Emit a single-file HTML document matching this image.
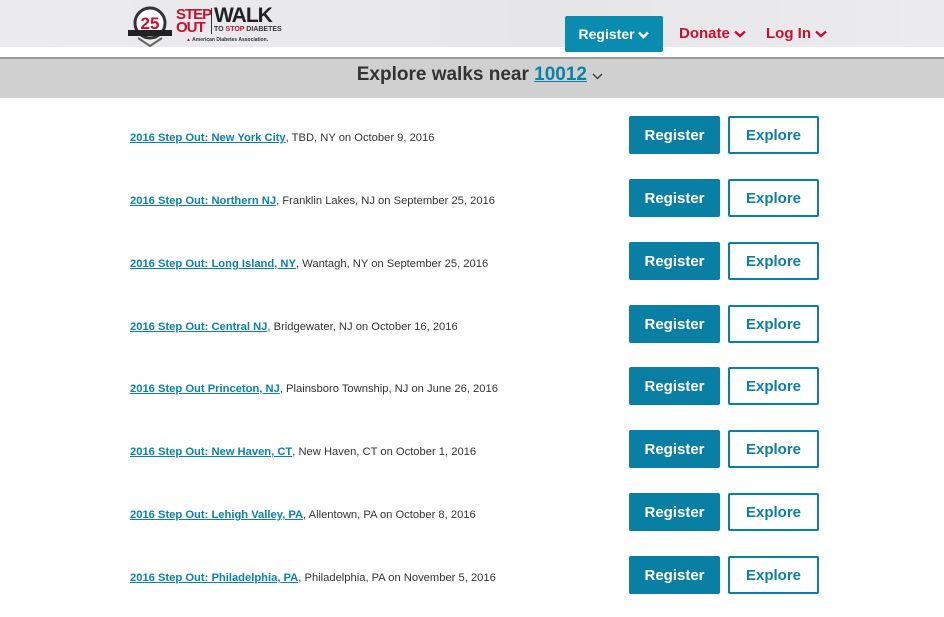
<!DOCTYPE html>
<html><head><meta charset="utf-8"><style>
*{margin:0;padding:0;box-sizing:border-box}
body{width:944px;height:617px;overflow:hidden;background:#fff;font-family:"Liberation Sans",Arial,sans-serif;position:relative}
.hdr{position:absolute;left:0;top:0;width:944px;height:47px;background:linear-gradient(90deg,#ececee,#e6e6e8 60%,#ececee)}
.strip{position:absolute;left:0;top:47px;width:944px;height:10px;background:#fff}
.bar{position:absolute;left:0;top:57px;width:944px;height:41px;background:#d0d0d0;border-top:2px solid #9a9a9a;text-align:center;font-weight:bold;font-size:19px;color:#333;line-height:31px;padding-left:16px}
.bar a{color:#0a82a8;text-decoration:underline}
.nav-reg{position:absolute;left:565px;top:16px;width:98px;height:36px;background:#0a8bb0;color:#fff;font-weight:bold;font-size:14px;line-height:36px;text-align:center;border-radius:2px}
.nav{position:absolute;top:25px;color:#c8102e;font-weight:bold;font-size:15px}
.row{position:absolute;left:130px;font-size:11.2px;color:#333;margin-top:1px}
.row a{color:#0a82a8;font-weight:bold;text-decoration:underline}
.b{position:absolute;height:38px;font-weight:bold;font-size:15px;text-align:center;border-radius:2px;padding-top:2px}
.r{left:629px;width:91px;background:#0a7fa4;color:#fff;line-height:36px}
.e{left:728px;width:91px;border:2px solid #0a7fa4;color:#0a7fa4;line-height:32px;background:#fff}
</style></head><body>
<div class="hdr"></div>
<div class="strip"></div>
<svg style="position:absolute;left:126px;top:4px" width="50" height="44" viewBox="0 0 50 44">
<circle cx="24" cy="19" r="15" fill="#fff" stroke="#333" stroke-width="3"/>
<rect x="2" y="26" width="44" height="6" fill="#222"/>
<path d="M12 34 L24 42 L36 34" fill="none" stroke="#666" stroke-width="2"/>
<text x="24" y="25" font-family="Liberation Sans" font-weight="bold" font-size="17" fill="#c8102e" text-anchor="middle">25</text>
</svg>
<div style="position:absolute;left:176px;top:8px;color:#c8102e;font-weight:bold;font-size:15px;line-height:13px;letter-spacing:-1px">STEP<br>OUT</div>
<div style="position:absolute;left:211px;top:8px;width:1px;height:26px;background:#333"></div>
<div style="position:absolute;left:214px;top:6px;color:#222;font-weight:bold;font-size:21px;letter-spacing:-1px;line-height:20px">WALK</div>
<div style="position:absolute;left:214px;top:26px;color:#333;font-size:7px;font-weight:bold">TO <span style="color:#c8102e">STOP</span> DIABETES</div>
<div style="position:absolute;left:186px;top:37px;color:#333;font-size:5px;font-weight:bold"><span style="color:#c8102e">▲</span> American Diabetes Association.</div>

<div class="nav-reg">Register <svg width="11" height="8" viewBox="0 0 11 8"><path d="M1 1.5 L5.5 6 L10 1.5" stroke="#fff" stroke-width="2.4" fill="none"/></svg></div>
<div class="nav" style="left:679px">Donate <svg width="12" height="8" viewBox="0 0 12 8"><path d="M1 1.5 L6 6 L11 1.5" stroke="#c8102e" stroke-width="2.4" fill="none"/></svg></div>
<div class="nav" style="left:766px">Log In <svg width="12" height="8" viewBox="0 0 12 8"><path d="M1 1.5 L6 6 L11 1.5" stroke="#c8102e" stroke-width="2.4" fill="none"/></svg></div>

<div class="bar">Explore walks near <a>10012</a> <svg width="11" height="7" viewBox="0 0 11 7"><path d="M1 1 L5.5 5.5 L10 1" stroke="#444" stroke-width="1.5" fill="none"/></svg></div>

<div class="row" style="top:131px"><a>2016 Step Out: New York City</a>, TBD, NY on October 9, 2016</div>
<div class="b r" style="top:116px">Register</div><div class="b e" style="top:116px">Explore</div>

<div class="row" style="top:194px"><a>2016 Step Out: Northern NJ</a>, Franklin Lakes, NJ on September 25, 2016</div>
<div class="b r" style="top:179px">Register</div><div class="b e" style="top:179px">Explore</div>

<div class="row" style="top:257px"><a>2016 Step Out: Long Island, NY</a>, Wantagh, NY on September 25, 2016</div>
<div class="b r" style="top:242px">Register</div><div class="b e" style="top:242px">Explore</div>

<div class="row" style="top:320px"><a>2016 Step Out: Central NJ</a>, Bridgewater, NJ on October 16, 2016</div>
<div class="b r" style="top:305px">Register</div><div class="b e" style="top:305px">Explore</div>

<div class="row" style="top:382px"><a>2016 Step Out Princeton, NJ</a>, Plainsboro Township, NJ on June 26, 2016</div>
<div class="b r" style="top:367px">Register</div><div class="b e" style="top:367px">Explore</div>

<div class="row" style="top:445px"><a>2016 Step Out: New Haven, CT</a>, New Haven, CT on October 1, 2016</div>
<div class="b r" style="top:430px">Register</div><div class="b e" style="top:430px">Explore</div>

<div class="row" style="top:508px"><a>2016 Step Out: Lehigh Valley, PA</a>, Allentown, PA on October 8, 2016</div>
<div class="b r" style="top:493px">Register</div><div class="b e" style="top:493px">Explore</div>

<div class="row" style="top:571px"><a>2016 Step Out: Philadelphia, PA</a>, Philadelphia, PA on November 5, 2016</div>
<div class="b r" style="top:556px">Register</div><div class="b e" style="top:556px">Explore</div>
</body></html>
